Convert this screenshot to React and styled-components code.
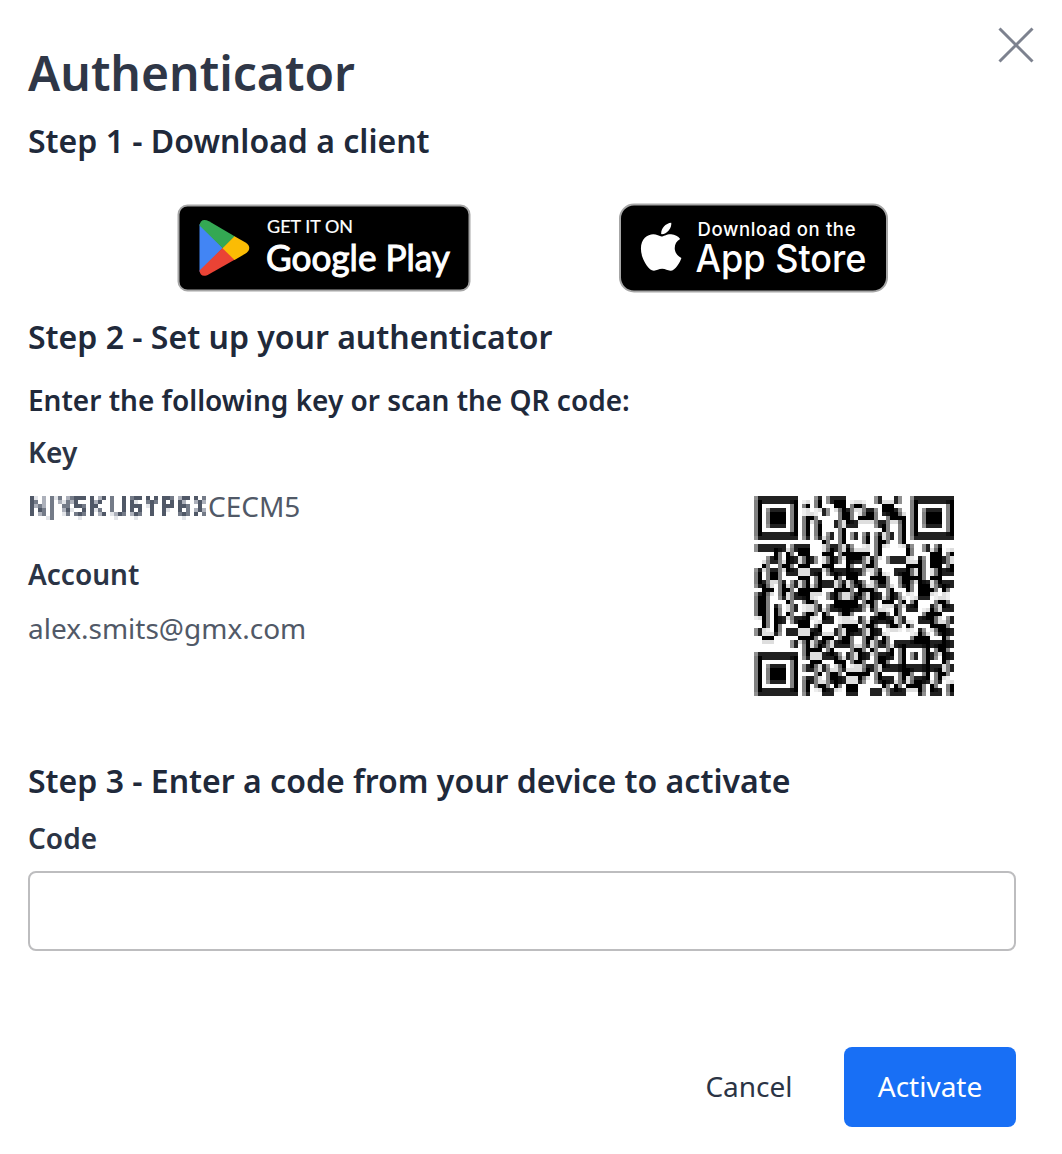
import React from "react";
import styled, { createGlobalStyle } from "styled-components";

const GlobalStyle = createGlobalStyle`
  *, *::before, *::after { box-sizing: border-box; }
  html, body { margin: 0; background: #fff; }
  body { font-family: "Noto Sans", "Open Sans", sans-serif; color: #20293a; }
`;

const Dialog = styled.main`
  width: 1062px;
  height: 1154px;
  padding: 27px 28px;
  background: #fff;
  display: flex;
  flex-direction: column;
  overflow: hidden;
`;

const Header = styled.header`
  display: flex;
  justify-content: space-between;
  align-items: flex-start;
  height: 92px;
`;

const Title = styled.h1`
  margin: 13px 0 0;
  color: #2f3747;
  font-size: 48px;
  line-height: 66px;
  font-weight: 600;
`;

const CloseButton = styled.button`
  display: flex;
  padding: 0;
  border: 0;
  background: none;
`;

const StepTitle = styled.h2`
  margin: 0;
  font-size: 32px;
  line-height: 44px;
  font-weight: 600;
`;

const Stores = styled.div`
  display: flex;
  align-items: center;
  gap: 148px;
  height: 90px;
  margin: 40px 0 22px;
  padding-left: 149px;
`;

const Badge = styled.a`
  display: flex;
  flex: none;
  width: ${(p) => p.$width}px;
  height: ${(p) => p.$height}px;
`;

const Instruction = styled.p`
  margin: 21px 0 12px;
  font-size: 28px;
  line-height: 40px;
  font-weight: 600;
`;

const Setup = styled.section`
  display: flex;
  justify-content: space-between;
  height: 327px;
  padding-right: 80px;
`;

const Details = styled.dl`
  margin: 0;
`;

const Label = styled.dt`
  color: #2b3445;
  font-size: 28px;
  line-height: 40px;
  font-weight: 600;
`;

const Value = styled.dd`
  display: flex;
  margin: 14px 0 28px;
  color: #515967;
  font-size: 28px;
  line-height: 40px;
`;

const MaskedKey = styled.svg`
  flex: none;
  width: 180px;
  height: 40px;
`;

const QrCode = styled.svg`
  width: 200px;
  height: 200px;
  margin-top: 64px;
`;

const FieldLabel = styled.label`
  margin-top: 15px;
  color: #2b3445;
  font-size: 28px;
  line-height: 40px;
  font-weight: 600;
`;

const CodeInput = styled.input`
  width: 988px;
  height: 80px;
  margin-top: 13px;
  padding: 0 20px;
  border: 2px solid #bdbdbf;
  border-radius: 8px;
  background: #fff;
  font: 28px "Noto Sans", sans-serif;
  outline: none;
`;

const Actions = styled.footer`
  display: flex;
  justify-content: flex-end;
  gap: 18px;
  margin: 96px 18px 0 0;
`;

const Button = styled.button`
  width: ${(p) => (p.$primary ? 172 : 154)}px;
  height: 80px;
  padding: 0 0 3px;
  border: 0;
  border-radius: 8px;
  background: ${(p) => (p.$primary ? "#186ff5" : "transparent")};
  color: ${(p) => (p.$primary ? "#fff" : "#2b3445")};
  font: 400 28px/40px "Noto Sans", sans-serif;
`;

const modules = [
  "111111100010111000001001001111111",
  "100000101010011011000110001000001",
  "101110100001001100110111001011101",
  "101110101100001101110011101011101",
  "101110101010010110001100101011101",
  "101110101010001000000100101000001",
  "111111101010101010101010101111111",
  "000000000001001000101100100000000",
  "111110111000110100001000010010100",
  "000101011001101111101000010001101",
  "001101101100110111010011100101110",
  "010011111001100100110000011101101",
  "101101100110111111001001110100111",
  "101100111010010110011100111101100",
  "110010001011101011001100110110111",
  "011011011110011101110010010111010",
  "110010111000110011011011000110000",
  "110001001100011110110110101000110",
  "110100100010111111010001011001011",
  "110101001101001100001101000011100",
  "010110111001100001011110100111001",
  "010100111010001110110011010001110",
  "100101100110010111011000000100111",
  "011000111101101100110100001110010",
  "000000001011011100101101111101111",
  "111111101110100011010010100010110",
  "111111101001110101101110101011011",
  "100000100110011011001100100010010",
  "101110101101001000110111111101101",
  "101110100010110111101000110010110",
  "101110101100111001001110101110100",
  "111111101011010110000101011101001",
  "111111101001100110011011100101101",
].map((row) => Array.from(row, Number));

[[0, 0], [0, 26], [26, 0]].forEach(([top, left]) => {
  for (let y = 0; y < 7; y++) {
    for (let x = 0; x < 7; x++) {
      const ring = x === 0 || y === 0 || x === 6 || y === 6;
      const centre = x > 1 && x < 5 && y > 1 && y < 5;
      modules[top + y][left + x] = ring || centre ? 1 : 0;
    }
  }
});
for (let i = 0; i < 8; i++) {
  modules[25][i] = 0;
  modules[25 + i][7] = 0;
  modules[7][i] = 0;
  modules[i][7] = 0;
  modules[7][25 + i] = 0;
  modules[i][25] = 0;
}
for (let i = 8; i < 25; i++) {
  modules[6][i] = (i + 1) % 2;
  modules[i][6] = (i + 1) % 2;
}

for (let y = 24; y < 29; y++) {
  for (let x = 24; x < 29; x++) {
    modules[y][x] = x === 24 || x === 28 || y === 24 || y === 28 || (x === 26 && y === 26) ? 1 : 0;
  }
}

const moduleAt = (x, y) => (modules[y] && modules[y][x]) || 0;
const rowSample = (x, y) => {
  const m = Math.floor(y / 3) * 2;
  if (y % 3 === 0) return moduleAt(x, m) * 0.87 + moduleAt(x, m - 1) * 0.13;
  if (y % 3 === 1) return moduleAt(x, m) * 0.87 + moduleAt(x, m + 1) * 0.13;
  return moduleAt(x, m + 1);
};
const sample = (x, y) => {
  const m = Math.floor(x / 3) * 2;
  if (x % 3 === 0) return (rowSample(m - 1, y) + rowSample(m, y)) / 2;
  return rowSample(x % 3 === 1 ? m : m + 1, y);
};

const qrCells = [];
for (let y = 0; y < 50; y++) {
  for (let x = 0; x < 50; x++) {
    const level = Math.round(255 * (1 - sample(x, y)));
    if (level < 255) qrCells.push({ x, y, fill: `rgb(${level},${level},${level})` });
  }
}

/* Mosaic over the hidden part of the key, four-pixel tiles: 0 clear, 4 solid. */
const tones = ["#fff", "#e3e5e9", "#adb1bb", "#747b88", "#505867"];
const mosaic = [
  "4102" + "031" + "3023" + "4440" + "40240" + "30040" + "3440" + "4040" + "4430" + "2440" + "403",
  "4302" + "030" + "2132" + "4000" + "42400" + "30040" + "4100" + "3430" + "4040" + "4200" + "242",
  "4232" + "030" + "0330" + "4430" + "44000" + "30040" + "4440" + "1400" + "4440" + "4430" + "040",
  "4043" + "030" + "0241" + "0040" + "41300" + "30040" + "4040" + "0400" + "4100" + "4030" + "242",
  "4023" + "030" + "0130" + "3430" + "40240" + "12430" + "2430" + "0400" + "4000" + "3430" + "403",
  "0000" + "130" + "0000" + "0100" + "00000" + "01000" + "0100" + "0000" + "0000" + "0100" + "000",
];
const mosaicTiles = mosaic.flatMap((row, y) =>
  Array.from(row, Number).map((v, x) => ({ x: 2 + x * 4, y: 10 + y * 4, fill: tones[v] }))
);

function GoogleBadge() {
  return (
    <svg width="294" height="88" viewBox="0 0 294 88" role="img">
      <rect x="1.5" y="1.5" width="291" height="85" rx="9" fill="#000" stroke="#a6a6a6" strokeWidth="2" />
      <path d="M22.5 20v48L46 44z" fill="#4285f4" />
      <path d="M22.5 21.5C23 16 27 14.5 32 17.3L58 32.5 46 44.5z" fill="#34a853" />
      <path d="M22.5 66.5C23 72 27 73 32 70.2L58 55.5 46 43.5z" fill="#ea4335" />
      <path d="M57.5 32.2l11 6.4c5 3 5 8 0 11l-11 6.4L45.5 44.2z" fill="#fbbc04" />
      <g fill="#fff" fontFamily="Lato, sans-serif">
        <text x="90" y="29" fontSize="18" textLength="86" lengthAdjust="spacingAndGlyphs" stroke="#fff" strokeWidth=".2">GET IT ON</text>
        <text x="89" y="66.5" fontSize="36" textLength="184" lengthAdjust="spacingAndGlyphs" stroke="#fff" strokeWidth="1">Google Play</text>
      </g>
    </svg>
  );
}

function AppleBadge() {
  return (
    <svg width="270" height="90" viewBox="0 0 270 90" role="img">
      <rect x="1" y="1.5" width="267" height="87" rx="14" fill="#000" stroke="#a6a6a6" strokeWidth="2" />
      <path transform="translate(21.5 16.2) scale(.1075)" fill="#fff" d="M318.7 268.7c-.2-36.7 16.4-64.4 50-84.8-18.8-26.9-47.2-41.7-84.7-44.6-35.5-2.8-74.3 20.7-88.5 20.7-15 0-49.4-19.7-76.4-19.7C63.3 141.2 4 184.8 4 273.5q0 39.3 14.4 81.2c12.8 36.7 59 126.7 107.2 125.2 25.2-.6 43-17.9 75.8-17.9 31.8 0 48.3 17.9 76.4 17.9 48.6-.7 90.4-82.5 102.6-119.3-65.2-30.7-61.7-90-61.7-91.9zm-56.6-164.2c27.3-32.4 24.8-61.9 24-72.5-24.1 1.4-52 16.4-67.9 34.9-17.5 19.8-27.800 44.3-25.6 71.9 26.1 2 49.9-11.4 69.5-34.3z" />
      <g fill="#fff" fontFamily="Inter, sans-serif">
        <text x="78.500" y="33" fontSize="18.5" fontWeight="500" textLength="158" lengthAdjust="spacing">Download on the</text>
        <text x="76.500" y="69" fontSize="38" fontWeight="500" textLength="171" lengthAdjust="spacingAndGlyphs">App Store</text>
      </g>
    </svg>
  );
}

function HiddenKey() {
  return (
    <MaskedKey viewBox="0 0 180 40" shapeRendering="crispEdges">
      {mosaicTiles.map((t) => (
        <rect key={`${t.x}-${t.y}`} x={t.x} y={t.y} width="4" height="4" fill={t.fill} />
      ))}
    </MaskedKey>
  );
}

export default function App() {
  return (
    <>
      <GlobalStyle />
      <Dialog>
        <Header>
          <Title>Authenticator</Title>
          <CloseButton aria-label="Close">
            <svg width="36" height="36" viewBox="0 0 36 36">
              <path d="M1.5 1.5l33 33m0-33l-33 33" stroke="#7d828f" strokeWidth="3" />
            </svg>
          </CloseButton>
        </Header>
        <StepTitle>Step 1 - Download a client</StepTitle>
        <Stores>
          <Badge $width={294} $height={88}><GoogleBadge /></Badge>
          <Badge $width={270} $height={90}><AppleBadge /></Badge>
        </Stores>
        <StepTitle>Step 2 - Set up your authenticator</StepTitle>
        <Instruction>Enter the following key or scan the QR code:</Instruction>
        <Setup>
          <Details>
            <Label>Key</Label>
            <Value><HiddenKey />CECM5</Value>
            <Label>Account</Label>
            <Value>alex.smits@gmx.com</Value>
          </Details>
          <QrCode viewBox="0 0 50 50" shapeRendering="crispEdges">
            {qrCells.map((c) => (
              <rect key={`${c.x}-${c.y}`} x={c.x} y={c.y} width="1" height="1" fill={c.fill} />
            ))}
          </QrCode>
        </Setup>
        <StepTitle>Step 3 - Enter a code from your device to activate</StepTitle>
        <FieldLabel htmlFor="code">Code</FieldLabel>
        <CodeInput id="code" />
        <Actions>
          <Button>Cancel</Button>
          <Button $primary>Activate</Button>
        </Actions>
      </Dialog>
    </>
  );
}
